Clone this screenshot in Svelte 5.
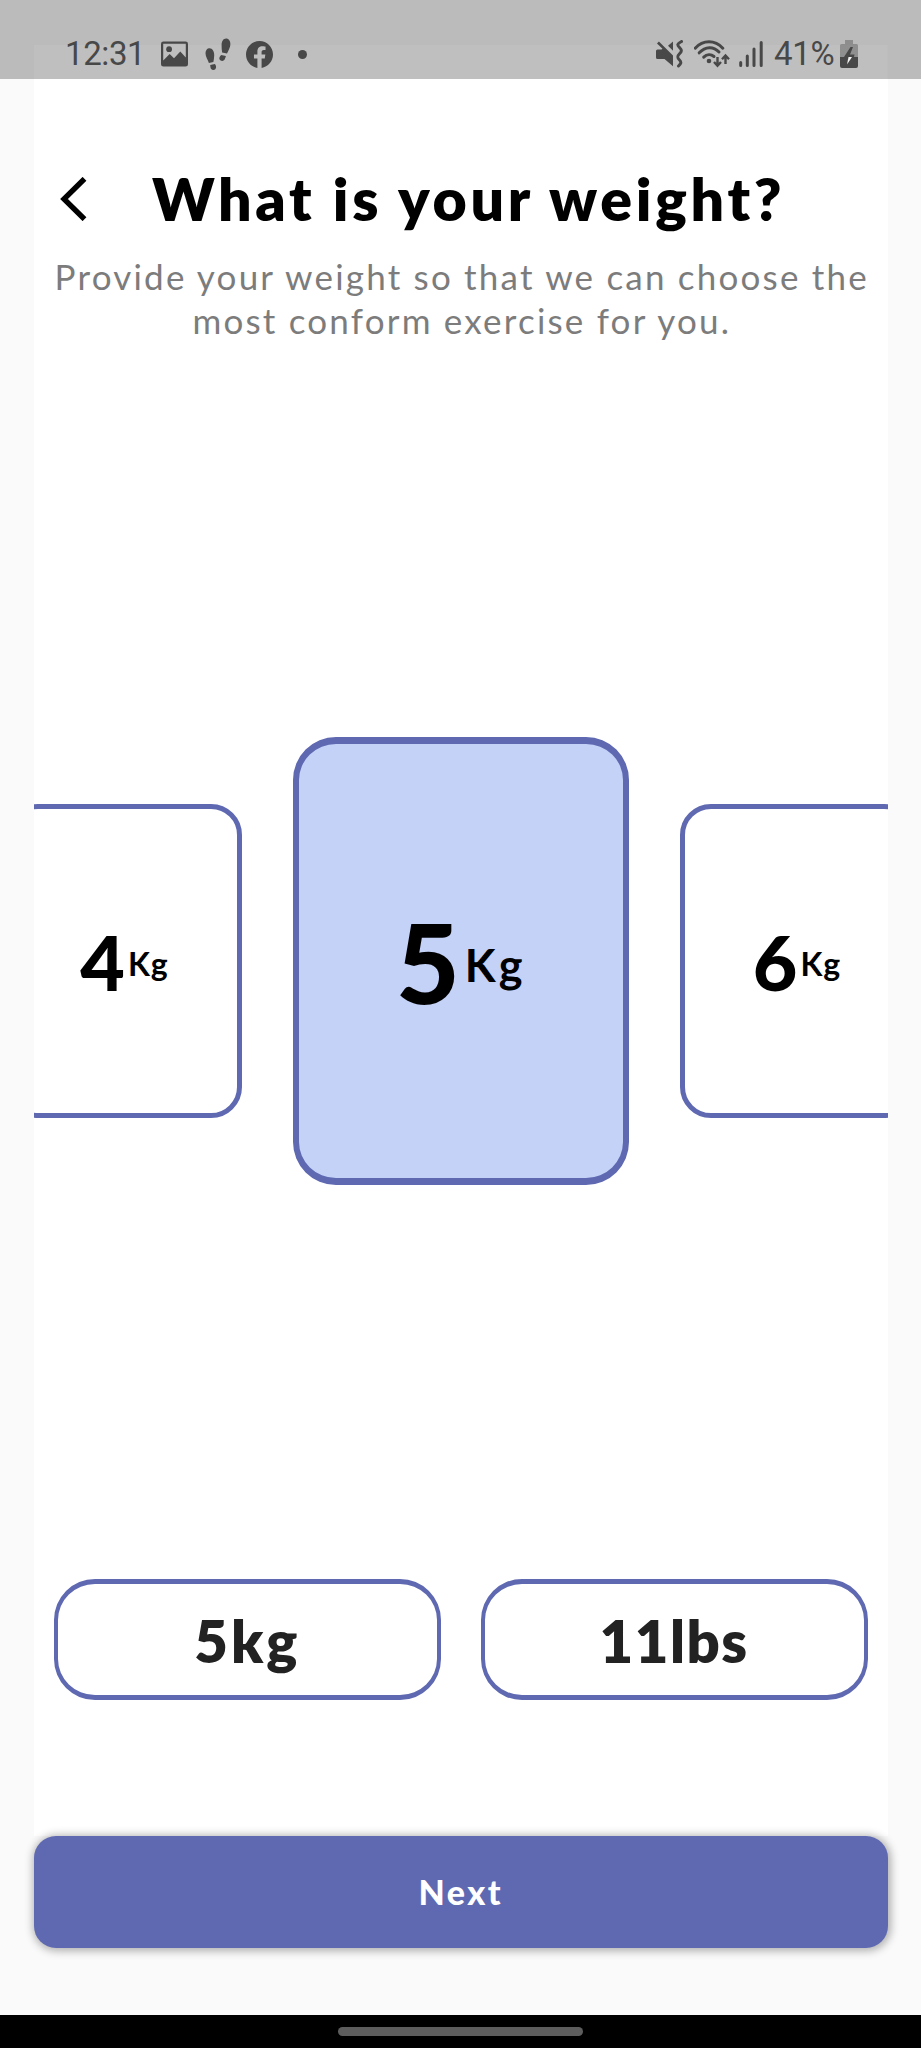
<script>
  const weights = [4, 5, 6];
  const selected = 5;
  const totals = [
    { label: '5kg', cls: 'kg' },
    { label: '11lbs', cls: 'lbs' }
  ];
</script>

<div class="screen">
  <header class="status">
    <div class="group left">
      <span class="clock">12:31</span>
      <svg class="photo" width="27" height="26" viewBox="0 0 28 26">
        <path fill-rule="evenodd" d="M2.5 0h23Q28 0 28 2.5v21Q28 26 25.5 26h-23Q0 26 0 23.500v-21Q0 0 2.500 0zM2.300 2.300v17.500L9 13l4.500 4.500L20 10.500l5.700 6V2.300z" />
        <circle cx="8.400" cy="8" r="3" />
      </svg>
      <svg class="steps" width="26" height="33" viewBox="0 0 26 33">
        <path d="M3.800 10.300c3.200-.7 5.700 3 5.400 7.200-.1 2.300-.3 4.500-.8 6.600l-4.500.8C2.800 21.800.5 18.500.5 15.200c0-2.500 1.300-4.500 3.300-4.900z" />
        <path d="M5.200 27l4.700-.9c1 1.300 1.800 3.300.6 4.800-1 1.300-3.300 1.400-4.300.2-.8-1-.8-2.600-1-4.100z" />
        <path d="M22 .5c-3.300-.8-5.400 2.500-5.400 6.200 0 2.900.1 5.400.5 7.700l4.900 1c1.500-3 3.400-6 3.400-9.400 0-2.700-1.300-5-3.400-5.500z" />
        <path d="M20.900 18l-4.700-1.100c-1.400 1.400-2.400 2.900-1.600 4.600.8 1.500 3 1.800 4.300.8 1.200-1 1.500-2.700 2-4.300z" />
      </svg>
      <svg class="fb" width="27" height="27" viewBox="0 0 24 24">
        <path d="M24 12.070C24 5.400 18.630 0 12 0S0 5.400 0 12.070C0 18.100 4.390 23.100 10.130 24v-8.440H7.080v-3.490h3.050V9.410c0-3.020 1.790-4.690 4.530-4.690 1.310 0 2.690.24 2.690.24v2.970h-1.520c-1.490 0-1.960.93-1.960 1.890v2.250h3.330l-.53 3.490h-2.800V24C19.610 23.100 24 18.100 24 12.070z" />
      </svg>
      <i class="dot"></i>
    </div>
    <div class="group right">
      <svg class="mute" width="28" height="28" viewBox="0 0 28 28">
        <path d="M1.500 9.500h4l1-.8L1 3.500 2.900 1.500 17 15.500v10.700L8.500 19h-7Q0 19 0 17.500V11q0-1.500 1.500-1.500z" />
        <path d="M17 1.500v9.200l-5-4.900z" />
        <path class="line" d="M25.500 1.500c-4.500 2.400-4.500 3.400-2 6.100s2.500 3.700 0 6.200-2.500 3.700 0 6.200 1 4.100-1 6" />
      </svg>
      <svg class="wifi" width="36" height="28" viewBox="0 0 36 28">
        <g class="line">
          <path d="M1.200 8.200C9-.4 21-.4 28.800 8.200" />
          <path d="M5.200 12.800C11.500 6.200 19.500 6.200 25 12" />
          <path d="M9.700 17.200C13 14 17 14 20 16.500" />
        </g>
        <circle cx="15" cy="21" r="2.300" />
        <g class="thin">
          <path d="M23.500 17v8M20 22l3.500 3.800L27 22M31.500 24v-8M28 19.300l3.500-3.800L35 19.300" />
        </g>
      </svg>
      <svg class="signal" width="24" height="26" viewBox="0 0 24 26">
        <path class="line" d="M1.700 21.500v3M8.300 15v9.500M15 8v16.500M22.200 1.500v23" />
      </svg>
      <span class="percent">41%</span>
      <svg class="battery" width="18" height="28" viewBox="0 0 18 28">
        <path opacity=".4" d="M5 0h8v4h3.500Q18 4 18 5.500V17H0V5.500Q0 4 1.500 4H5z" />
        <path d="M0 17h18v9q0 2-2 2H2q-2 0-2-2z" />
        <path d="M10.500 7L4 17h10l.5-2.500H10L13 7z" />
        <path fill="#f3f3f3" d="M8.500 17H12l-5 7.500z" />
      </svg>
    </div>
  </header>

  <main class="panel">
    <div class="heading">
      <svg class="back" width="28" height="44" viewBox="0 0 28 44">
        <path d="M24.500 1.800L4 22l20.500 20.200" />
      </svg>
      <h1>What is your weight?</h1>
    </div>
    <p class="intro">
      <span class="l1">Provide your weight so that we can choose the</span>
      <span class="l2">most conform exercise for you.</span>
    </p>

    <div class="carousel">
      {#each weights as w}
        <div class="card" class:active={w === selected}>
          <b>{w}</b><span>Kg</span>
        </div>
      {/each}
    </div>

    <div class="totals">
      {#each totals as t}
        <div class="total"><span class={t.cls}>{t.label}</span></div>
      {/each}
    </div>
  </main>

  <button class="next">Next</button>

  <footer class="nav"><i></i></footer>
</div>

<style>
  :global(body) { margin: 0; background: #fafafa; }
  .screen {
    width: 921px;
    height: 2048px;
    overflow: hidden;
    display: flex;
    flex-direction: column;
    background: #fafafa;
    font-family: Lato, sans-serif;
    color: #000;
  }
  .status {
    box-sizing: border-box;
    height: 79px;
    flex: none;
    padding: 28px 63px 0 65px;
    display: flex;
    justify-content: space-between;
    background:
      linear-gradient(#bfbfbf, #bfbfbf) 34px 45px / 853.500px 34px no-repeat,
      #bbb;
    font-family: Roboto, sans-serif;
    color: #484848;
  }
  .status svg { fill: #484848; flex: none; display: block; }
  .group { display: flex; align-items: center; height: 52px; }
  .clock, .percent { font-size: 33px; line-height: 52px; white-space: nowrap; }
  .clock { width: 96px; letter-spacing: -0.400px; }
  .steps { margin-left: 17px; }
  .fb { margin-left: 15px; }
  .dot { width: 9px; height: 9px; border-radius: 50%; background: #484848; margin-left: 24.500px; }
  .status .line { fill: none; stroke: #484848; stroke-width: 3; stroke-linecap: round; }
  .status .thin { fill: none; stroke: #484848; stroke-width: 2.400; }
  .wifi { margin-left: 10px; }
  .signal { margin-left: 9px; }
  .percent { width: 62px; margin-left: 11px; letter-spacing: -0.300px; }
  .battery { margin-left: 4px; }

  .panel {
    width: 853.500px;
    height: 1756.500px;
    flex: none;
    margin-left: 34px;
    background: #fff;
    display: flex;
    flex-direction: column;
  }
  .heading { height: 90px; margin-top: 75px; display: flex; align-items: center; flex: none; }
  .back { margin: 0 0 0 26px; flex: none; }
  .back path { fill: none; stroke: #000; stroke-width: 5.400; }
  h1 { margin: 0 0 0 64px; font-size: 59px; line-height: 90px; font-weight: 800; white-space: nowrap; letter-spacing: 3.700px; }
  .intro {
    margin: 10px 0 1px;
    flex: none;
    display: flex;
    flex-direction: column;
    align-items: center;
    font-size: 35px;
    line-height: 44px;
    color: #7c7c7c;
    white-space: nowrap;
  }
  .l1, .l2 { letter-spacing: 2.200px; padding-left: 2px; }

  .carousel {
    margin-top: 394px;
    height: 448px;
    flex: none;
    display: flex;
    justify-content: center;
    align-items: center;
    gap: 51px;
    overflow: hidden;
  }
  .card {
    box-sizing: border-box;
    flex: none;
    width: 235px;
    height: 314px;
    border: 5px solid #5e69b2;
    border-radius: 31px;
    display: flex;
    justify-content: center;
    align-items: center;
  }
  .card b { font-size: 77px; font-weight: 900; line-height: 1; }
  .card span { font-size: 32px; font-weight: 700; line-height: 1; letter-spacing: 1px; margin-left: 3px; padding-top: 6px; }
  .active {
    width: 335.500px;
    height: 448px;
    border-width: 7px 6px;
    border-radius: 43px;
    background: #c4d2f7;
  }
  .active b { font-size: 110px; }
  .active span { font-size: 45px; letter-spacing: 3px; margin-left: 5px; padding-top: 8px; }

  .totals { display: flex; gap: 40px; margin: 394px 20px 0; flex: none; }
  .total {
    box-sizing: border-box;
    flex: 1;
    height: 121px;
    border: solid #5e69b2;
    border-width: 5px 4px;
    border-radius: 41px;
    display: flex;
    align-items: center;
    justify-content: center;
    font-size: 58px;
    font-weight: 800;
    color: #222;
  }
  .total span { padding-top: 2px; }
  .total .kg { letter-spacing: 3px; }
  .total .lbs { letter-spacing: 1.500px; }

  .next {
    width: 853.500px;
    height: 112px;
    flex: none;
    margin: 0 0 0 34px;
    padding: 0;
    border: 0;
    border-radius: 22px;
    background: #5e69b2;
    color: #fff;
    font: 900 34px/112px Lato, sans-serif;
    letter-spacing: 2.500px;
    box-shadow: 1px 1px 9px 2px rgba(0, 0, 0, 0.3);
  }
  .nav {
    margin-top: auto;
    height: 33.500px;
    flex: none;
    background: #000;
    display: flex;
    justify-content: center;
  }
  .nav i { width: 245px; height: 9px; border-radius: 5px; background: #5d5d5d; margin-top: 12.500px; }
</style>
